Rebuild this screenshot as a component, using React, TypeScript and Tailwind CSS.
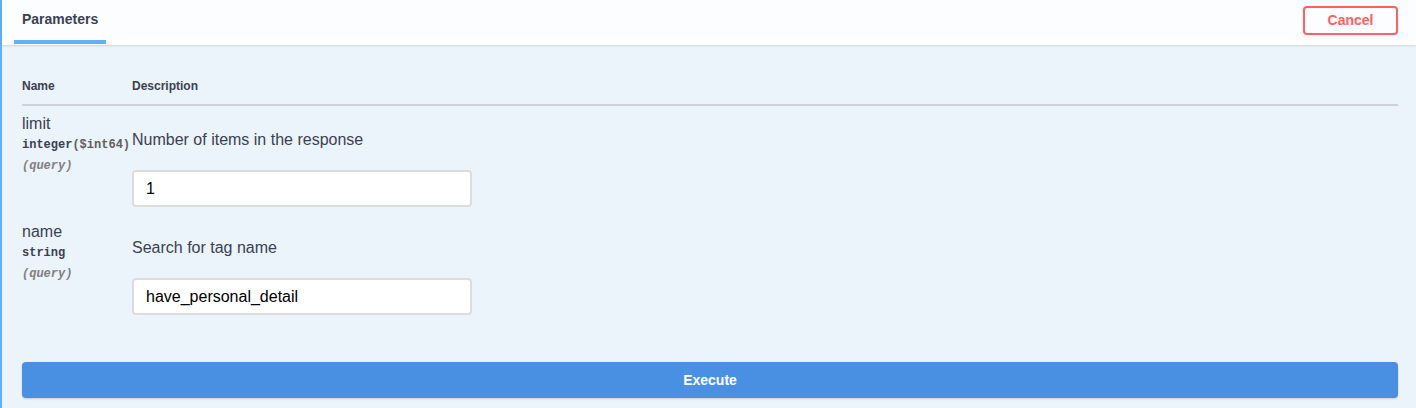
import { useState } from "react";

const SANS = "font-['Liberation_Sans',Arial,sans-serif]";
const MONO = "font-['Liberation_Mono','Courier_New',monospace]";

interface Param {
  name: string;
  type: string;
  format?: string;
  location: string;
  description: string;
  value: string;
}

const PARAMS: Param[] = [
  {
    name: "limit",
    type: "integer",
    format: "($int64)",
    location: "(query)",
    description: "Number of items in the response",
    value: "1",
  },
  {
    name: "name",
    type: "string",
    location: "(query)",
    description: "Search for tag name",
    value: "have_personal_detail",
  },
];

function ParamRow({ param }: { param: Param }) {
  const [value, setValue] = useState(param.value);
  return (
    <div className="flex h-[108px] pt-2">
      {/* Name column */}
      <div className="w-[110px] shrink-0">
        <div className="text-[16px] leading-[20px] text-[#3b4151]">{param.name}</div>
        <div className={`${MONO} text-[12px] leading-[22px] font-bold text-[#3b4151] whitespace-nowrap`}>
          {param.type}
          {param.format && <span className="text-[#606060]">{param.format}</span>}
        </div>
        <div className={`${MONO} text-[12px] leading-[20px] font-bold italic text-[#808080]`}>
          {param.location}
        </div>
      </div>

      {/* Description column */}
      <div className="pt-4">
        <p className="text-[16px] leading-[20px] text-[#3b4151]">{param.description}</p>
        <input
          value={value}
          onChange={(e) => setValue(e.target.value)}
          className={`${SANS} mt-[20px] block h-[37px] w-[340px] rounded-[4px] border-2 border-[#dcdcdc] bg-white px-3 text-[16px] text-black outline-none`}
        />
      </div>
    </div>
  );
}

export default function App() {
  return (
    <div className={`${SANS} min-h-[408px] bg-[#ebf3fb] border-l-2 border-[#61affe]`}>
      {/* Tab header */}
      <div className="flex h-[45px] items-start justify-between bg-[#fcfdfe] pr-[18px] shadow-[0_1px_2px_rgba(0,0,0,0.12)]">
        <div className="ml-3 flex h-full flex-col justify-between">
          <span className="px-2 pt-[10px] text-[14px] leading-[18px] font-bold text-[#3b4151]">
            Parameters
          </span>
          <div className="mb-[1px] h-1 w-full bg-[#61affe]" />
        </div>
        <button className="mt-[6px] h-[29px] w-[95px] rounded-[4px] border-2 border-[#ff6060] text-[14px] font-bold text-[#ff6060]">
          Cancel
        </button>
      </div>

      <div className="pl-5 pr-[18px]">
        {/* Table head */}
        <div className="flex pt-[33px] pb-[10px] text-[12px] leading-[16px] font-bold text-[#3b4151]">
          <div className="w-[110px]">Name</div>
          <div>Description</div>
        </div>
        <div className="h-[2px] bg-[#cdd2da]" />

        {PARAMS.map((p) => (
          <ParamRow key={p.name} param={p} />
        ))}

        <div className="pt-10">
          <button className="block h-[36px] w-full rounded-[4px] bg-[#4990e2] text-[14px] font-bold text-white shadow-[0_1px_2px_rgba(0,0,0,0.15)]">
            Execute
          </button>
        </div>
      </div>
    </div>
  );
}
